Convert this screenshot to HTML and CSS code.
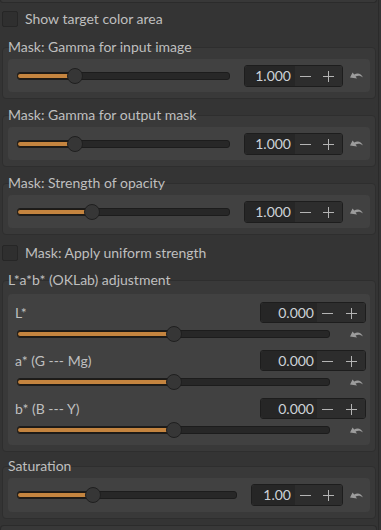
FILE: index.html
```html
<!DOCTYPE html>
<html>
<head>
<meta charset="utf-8">
<link rel="stylesheet" href="styles.css">
</head>
<body>
<div class="panel">
  <div class="prev-end"></div>

  <div class="check first"><span class="cb"></span><span class="ctext">Show target color area</span></div>

  <section class="group">
    <div class="title">Mask: Gamma for input image</div>
    <div class="box">
      <div class="inner row">
        <div class="slider"><div class="fill" style="width:27%"></div><div class="handle" style="left:27%"></div></div>
        <div class="spin w99"><span class="val v51">1.000</span><span class="btns"><svg viewBox="0 0 47 20" width="47" height="20"><path d="M5 10.5H16M28 10.5H39M33.5 5V16"/></svg></span></div>
        <svg class="reset" viewBox="0 0 13 9" width="13" height="9"><path d="M0 6.5L2.6 1.6L4.2 3.6C7 1.6 11 1.8 13 6.6C10.6 4.6 7.8 4.4 5.6 5.6L7 7.6Z"/></svg>
      </div>
    </div>
  </section>

  <section class="group">
    <div class="title">Mask: Gamma for output mask</div>
    <div class="box">
      <div class="inner row">
        <div class="slider"><div class="fill" style="width:27%"></div><div class="handle" style="left:27%"></div></div>
        <div class="spin w99"><span class="val v51">1.000</span><span class="btns"><svg viewBox="0 0 47 20" width="47" height="20"><path d="M5 10.5H16M28 10.5H39M33.5 5V16"/></svg></span></div>
        <svg class="reset" viewBox="0 0 13 9" width="13" height="9"><path d="M0 6.5L2.6 1.6L4.2 3.6C7 1.6 11 1.8 13 6.6C10.6 4.6 7.8 4.4 5.6 5.6L7 7.6Z"/></svg>
      </div>
    </div>
  </section>

  <section class="group">
    <div class="title">Mask: Strength of opacity</div>
    <div class="box">
      <div class="inner row">
        <div class="slider"><div class="fill" style="width:35%"></div><div class="handle" style="left:35%"></div></div>
        <div class="spin w99"><span class="val v51">1.000</span><span class="btns"><svg viewBox="0 0 47 20" width="47" height="20"><path d="M5 10.5H16M28 10.5H39M33.5 5V16"/></svg></span></div>
        <svg class="reset" viewBox="0 0 13 9" width="13" height="9"><path d="M0 6.5L2.6 1.6L4.2 3.6C7 1.6 11 1.8 13 6.6C10.6 4.6 7.8 4.4 5.6 5.6L7 7.6Z"/></svg>
      </div>
    </div>
  </section>

  <div class="check second"><span class="cb"></span><span class="ctext">Mask: Apply uniform strength</span></div>

  <section class="group lab">
    <div class="title">L*a*b* (OKLab) adjustment</div>
    <div class="box">
      <div class="inner labinner">
        <div class="labrow">
          <div class="rowa"><span class="lbl">L*</span><div class="spin w106"><span class="val v57">0.000</span><span class="btns"><svg viewBox="0 0 48 20" width="48" height="20"><path d="M5 10.5H16M29 10.5H40M34.5 5V16"/></svg></span></div></div>
          <div class="rowb"><div class="slider"><div class="fill" style="width:50%"></div><div class="handle" style="left:50%"></div></div><svg class="reset" viewBox="0 0 13 9" width="13" height="9"><path d="M0 6.5L2.6 1.6L4.2 3.6C7 1.6 11 1.8 13 6.6C10.6 4.6 7.8 4.4 5.6 5.6L7 7.6Z"/></svg></div>
        </div>
        <div class="labrow">
          <div class="rowa"><span class="lbl">a* (G --- Mg)</span><div class="spin w106"><span class="val v57">0.000</span><span class="btns"><svg viewBox="0 0 48 20" width="48" height="20"><path d="M5 10.5H16M29 10.5H40M34.5 5V16"/></svg></span></div></div>
          <div class="rowb"><div class="slider"><div class="fill" style="width:50%"></div><div class="handle" style="left:50%"></div></div><svg class="reset" viewBox="0 0 13 9" width="13" height="9"><path d="M0 6.5L2.6 1.6L4.2 3.6C7 1.6 11 1.8 13 6.6C10.6 4.6 7.8 4.4 5.6 5.6L7 7.6Z"/></svg></div>
        </div>
        <div class="labrow">
          <div class="rowa"><span class="lbl">b* (B --- Y)</span><div class="spin w106"><span class="val v57">0.000</span><span class="btns"><svg viewBox="0 0 48 20" width="48" height="20"><path d="M5 10.5H16M29 10.5H40M34.5 5V16"/></svg></span></div></div>
          <div class="rowb"><div class="slider"><div class="fill" style="width:50%"></div><div class="handle" style="left:50%"></div></div><svg class="reset" viewBox="0 0 13 9" width="13" height="9"><path d="M0 6.5L2.6 1.6L4.2 3.6C7 1.6 11 1.8 13 6.6C10.6 4.6 7.8 4.4 5.6 5.6L7 7.6Z"/></svg></div>
        </div>
      </div>
    </div>
  </section>

  <section class="group sat">
    <div class="title">Saturation</div>
    <div class="box">
      <div class="inner row">
        <div class="slider"><div class="fill" style="width:34.5%"></div><div class="handle" style="left:34.5%"></div></div>
        <div class="spin w92"><span class="val v44">1.00</span><span class="btns"><svg viewBox="0 0 47 20" width="47" height="20"><path d="M5 10.5H16M28 10.5H39M33.5 5V16"/></svg></span></div>
        <svg class="reset" viewBox="0 0 13 9" width="13" height="9"><path d="M0 6.5L2.6 1.6L4.2 3.6C7 1.6 11 1.8 13 6.6C10.6 4.6 7.8 4.4 5.6 5.6L7 7.6Z"/></svg>
      </div>
    </div>
  </section>

  <div class="next-start"></div>
</div>
</body>
</html>
```

FILE: styles.css
```css
* { box-sizing: border-box; }
html, body {
  margin: 0;
  padding: 0;
  background: #343434;
  width: 381px;
  height: 530px;
  overflow: hidden;
}
body {
  font-family: "Lato", "Open Sans", sans-serif;
  font-size: 14px;
  color: #bfbfbf;
}
.panel {
  width: 379px;
  height: 530px;
  border-right: 1px solid #2a2a2a;
  display: flex;
  flex-direction: column;
}
.prev-end {
  height: 3px;
  width: 377px;
  flex: none;
  background: #383838;
  border: 1px solid #2b2b2b;
  border-top: none;
  border-radius: 0 0 4px 4px;
}
.check {
  display: flex;
  align-items: center;
  height: 18px;
  flex: none;
  padding-left: 2px;
  gap: 7px;
}
.check.first { margin-top: 7px; }
.check.second { margin-top: 9px; }
.cb {
  width: 16px;
  height: 16px;
  background: #2f2f2f;
  border: 1px solid #262626;
  border-radius: 2px;
}
.ctext { line-height: 18px; }

.group { display: flex; flex-direction: column; margin-top: 8px; flex: none; }
.check.first + .group { margin-top: 11px; }
.title {
  position: relative;
  z-index: 1;
  height: 16px;
  line-height: 16px;
  padding-left: 8px;
}
.box {
  margin-top: -8px;
  margin-left: 2px;
  width: 374px;
  background: #393939;
  border: 1px solid #2e2e2e;
  border-radius: 4px;
  padding: 11px 5px 6px 5px;
}
.inner {
  background: #414141;
  border-radius: 4px;
  height: 33px;
}
.row {
  display: flex;
  align-items: center;
  padding: 0 7px 0 9px;
}
.row .slider { flex: 1; }
.row .spin { margin-left: 14px; }
.row .reset { margin-left: 7px; }

.slider {
  position: relative;
  height: 16px;
  display: flex;
  align-items: center;
}
.slider::before {
  content: "";
  flex: 1;
  height: 6px;
  background: #272727;
  border: 1px solid #1c1c1c;
  border-radius: 3px;
}
.fill {
  position: absolute;
  left: 0;
  top: 5px;
  height: 6px;
  background: #c4843f;
  border: 1px solid #1f1a14;
  border-radius: 3px 0 0 3px;
}
.handle {
  position: absolute;
  top: 0;
  width: 16px;
  height: 16px;
  margin-left: -8px;
  border-radius: 50%;
  background: #363636;
  border: 1px solid #1f1f1f;
}

.spin {
  display: flex;
  height: 22px;
  border: 1px solid #1d1d1d;
  border-radius: 3px;
  overflow: hidden;
  flex: none;
}
.w99 { width: 99px; }
.w92 { width: 92px; }
.w106 { width: 106px; height: 21px; }
.val {
  background: #262626;
  color: #cdd2d8;
  text-align: right;
  padding-right: 4px;
  line-height: 20px;
}
.v51 { width: 51px; }
.v44 { width: 44px; }
.v57 { width: 57px; padding-right: 3px; line-height: 19px; }
.btns {
  flex: 1;
  background: #2d2d2d;
  display: flex;
  align-items: center;
}
.btns svg { display: block; }
.btns path { stroke: #b4b4b4; stroke-width: 1; fill: none; }
.reset { flex: none; display: block; }
.reset path { fill: #9c9c9c; }

.sat .inner { height: 34px; }
.sat { margin-top: 6px; }
.lab { margin-top: 10px; }
.lab .box { padding-top: 13px; }
.labinner {
  height: 151px;
  padding: 8px 4px 7px 0;
  display: flex;
  flex-direction: column;
  gap: 8px;
}
.labrow { display: flex; flex-direction: column; gap: 3px; }
.rowa { display: flex; align-items: center; height: 21px; }
.rowa .lbl { flex: 1; padding-left: 7px; }
.rowb { display: flex; align-items: center; height: 16px; padding-left: 9px; padding-right: 3px; }
.rowb .slider { flex: 1; }
.rowb .reset { margin-left: 20px; }

.next-start {
  margin-top: 6px;
  width: 377px;
  height: 10px;
  flex: none;
  background: #383838;
  border: 1px solid #2b2b2b;
  border-bottom: none;
  border-radius: 4px 4px 0 0;
}
```
